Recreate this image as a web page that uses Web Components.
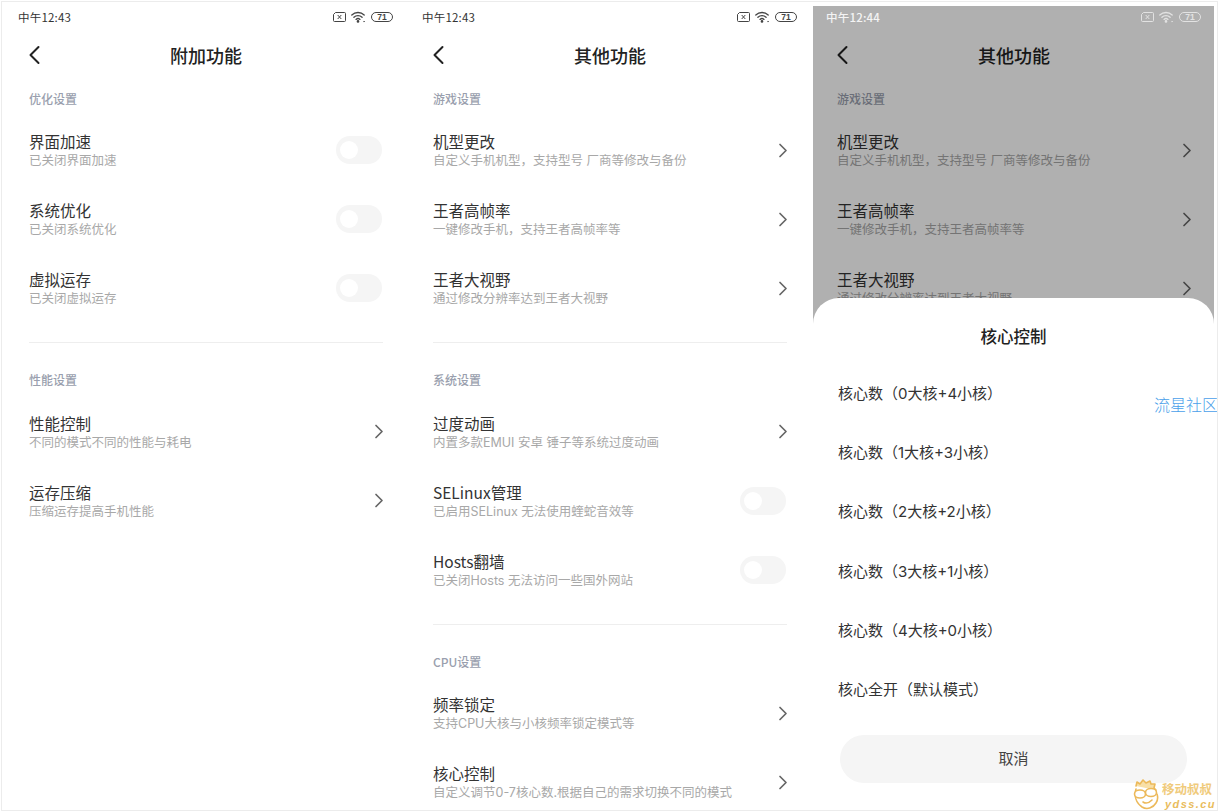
<!DOCTYPE html>
<html lang="zh">
<head>
<meta charset="utf-8">
<title>功能设置</title>
<style>
  html, body { margin: 0; height: 100%; background: #fff; overflow: hidden; }
  body { font-family: "Noto Sans CJK SC", "Noto Sans", sans-serif; color: #333; }
  phone-screen:nth-child(3) { --pad-left: 24px; --edge: 3px; --top: 4px; --status-h: 28px; --status-pb: 6px; }
</style>
</head>
<body>
<screen-frame>
  <phone-screen>
    <status-bar time="中午12:43"></status-bar>
    <nav-bar title="附加功能"></nav-bar>
    <setting-section label="优化设置">
      <setting-row title="界面加速" sub="已关闭界面加速" type="switch"></setting-row>
      <setting-row title="系统优化" sub="已关闭系统优化" type="switch"></setting-row>
      <setting-row title="虚拟运存" sub="已关闭虚拟运存" type="switch"></setting-row>
    </setting-section>
    <setting-section label="性能设置" divided>
      <setting-row title="性能控制" sub="不同的模式不同的性能与耗电"></setting-row>
      <setting-row title="运存压缩" sub="压缩运存提高手机性能"></setting-row>
    </setting-section>
  </phone-screen>

  <phone-screen>
    <status-bar time="中午12:43"></status-bar>
    <nav-bar title="其他功能"></nav-bar>
    <setting-section label="游戏设置">
      <setting-row title="机型更改" sub="自定义手机机型，支持型号 厂商等修改与备份"></setting-row>
      <setting-row title="王者高帧率" sub="一键修改手机，支持王者高帧率等"></setting-row>
      <setting-row title="王者大视野" sub="通过修改分辨率达到王者大视野"></setting-row>
    </setting-section>
    <setting-section label="系统设置" divided>
      <setting-row title="过度动画" sub="内置多款EMUI 安卓 锤子等系统过度动画"></setting-row>
      <setting-row title="SELinux管理" sub="已启用SELinux 无法使用蝰蛇音效等" type="switch"></setting-row>
      <setting-row title="Hosts翻墙" sub="已关闭Hosts 无法访问一些国外网站" type="switch"></setting-row>
    </setting-section>
    <setting-section label="CPU设置" divided>
      <setting-row title="频率锁定" sub="支持CPU大核与小核频率锁定模式等"></setting-row>
      <setting-row title="核心控制" sub="自定义调节0-7核心数.根据自己的需求切换不同的模式"></setting-row>
    </setting-section>
  </phone-screen>

  <phone-screen dimmed>
    <status-bar time="中午12:44" light></status-bar>
    <nav-bar title="其他功能"></nav-bar>
    <setting-section label="游戏设置">
      <setting-row title="机型更改" sub="自定义手机机型，支持型号 厂商等修改与备份"></setting-row>
      <setting-row title="王者高帧率" sub="一键修改手机，支持王者高帧率等"></setting-row>
      <setting-row title="王者大视野" sub="通过修改分辨率达到王者大视野"></setting-row>
    </setting-section>
    <bottom-sheet title="核心控制" cancel="取消">
      <sheet-item>核心数（0大核+4小核）</sheet-item>
      <sheet-item>核心数（1大核+3小核）</sheet-item>
      <sheet-item>核心数（2大核+2小核）</sheet-item>
      <sheet-item>核心数（3大核+1小核）</sheet-item>
      <sheet-item>核心数（4大核+0小核）</sheet-item>
      <sheet-item>核心全开（默认模式）</sheet-item>
    </bottom-sheet>
  </phone-screen>

  <water-marks></water-marks>
</screen-frame>

<script>
class ScreenFrame extends HTMLElement {
  connectedCallback() {
    this.attachShadow({ mode: 'open' });
    this.shadowRoot.innerHTML = `
      <style>
        :host {
          display: flex;
          position: relative;
          box-sizing: border-box;
          margin: 1px;
          height: 810px;
          width: 1217px;
          border: 1px solid #ececec;
          overflow: hidden;
          background: #fff;
        }
      </style>
      <slot></slot>
    `;
  }
}
customElements.define('screen-frame', ScreenFrame);

class PhoneScreen extends HTMLElement {
  connectedCallback() {
    this.attachShadow({ mode: 'open' });
    this.shadowRoot.innerHTML = `
      <style>
        :host {
          display: block;
          position: relative;
          box-sizing: border-box;
          flex: 0 0 auto;
          width: calc(404px - var(--edge, 0px));
          margin-left: var(--edge, 0px);
          margin-top: var(--top, 0px);
          height: calc(100% - var(--top, 0px));
          padding: 0 23px 0 var(--pad-left, 27px);
          overflow: hidden;
        }
        .dim {
          position: absolute;
          inset: 0;
          background: rgba(0,0,0,0.31);
          z-index: 1;
        }
      </style>
      ${this.hasAttribute('dimmed') ? '<div class="dim"></div>' : ''}
      <slot></slot>
    `;
  }
}
customElements.define('phone-screen', PhoneScreen);

class StatusBar extends HTMLElement {
  connectedCallback() {
    this.attachShadow({ mode: 'open' });
    const light = this.hasAttribute('light');
    this.shadowRoot.innerHTML = `
      <style>
        :host {
          display: flex;
          position: relative;
          z-index: 2;
          box-sizing: border-box;
          align-items: center;
          justify-content: space-between;
          height: var(--status-h, 32px);
          padding-bottom: var(--status-pb, 2px);
          margin: 0 -10px 0 -11px;
          color: ${light ? '#f4f4f4' : '#333'};
          font-size: 11.5px;
          font-weight: ${light ? 500 : 400};
          letter-spacing: 0.2px;
        }
        .icons { display: flex; align-items: center; gap: 5px; color: ${light ? '#e2e2e2' : '#444'}; }
        svg { display: block; }
        .battery {
          box-sizing: border-box;
          width: 22px;
          height: 10px;
          border: 1px solid currentColor;
          border-radius: 5px;
          font: 700 8.5px/8px "Liberation Sans", sans-serif;
          text-align: center;
          letter-spacing: 0;
        }
      </style>
      <span>${this.getAttribute('time')}</span>
      <span class="icons">
        <svg width="13" height="10" viewBox="0 0 13 10" fill="none" stroke="currentColor" stroke-width="1">
          <path d="M2.5 .5h9a1 1 0 0 1 1 1v7a1 1 0 0 1-1 1h-10a1 1 0 0 1-1-1v-6z"/>
          <path d="M4.7 3l3.6 4M8.3 3l-3.6 4"/>
        </svg>
        <svg width="15" height="12" viewBox="0 0 15 12" fill="none" stroke="currentColor" stroke-width="1.3" stroke-linecap="round">
          <path d="M.8 4a9 9 0 0 1 12.4 0"/>
          <path d="M2.9 6.2a6 6 0 0 1 8.2 0"/>
          <path d="M5 8.4a3 3 0 0 1 4 0"/>
          <circle cx="7" cy="10.4" r=".7" fill="currentColor"/>
          <circle cx="13" cy="10.6" r=".4" fill="currentColor" stroke-width=".5"/>
        </svg>
        <span class="battery">71</span>
      </span>
    `;
  }
}
customElements.define('status-bar', StatusBar);

class NavBar extends HTMLElement {
  connectedCallback() {
    this.attachShadow({ mode: 'open' });
    this.shadowRoot.innerHTML = `
      <style>
        :host {
          display: grid;
          grid-template-columns: 40px 1fr 40px;
          align-items: center;
          height: 44px;
          margin-top: -1px;
        }
        svg { display: block; }
        .title {
          text-align: center;
          font-size: 18px;
          line-height: 44px;
          font-weight: 500;
          color: #222;
        }
      </style>
      <svg width="12" height="20" viewBox="0 0 12 20" fill="none" stroke="#222" stroke-width="2" stroke-linecap="round" stroke-linejoin="round">
        <path d="M9.5 2L1.5 10l8 8"/>
      </svg>
      <div class="title">${this.getAttribute('title')}</div>
      <span></span>
    `;
  }
}
customElements.define('nav-bar', NavBar);

class SettingSection extends HTMLElement {
  connectedCallback() {
    this.attachShadow({ mode: 'open' });
    const divided = this.hasAttribute('divided');
    this.shadowRoot.innerHTML = `
      <style>
        :host { display: block; }
        .line { height: 1px; background: #eee; margin: 19.5px 0 27px; }
        .label {
          margin-top: ${divided ? 0 : 12}px;
          margin-bottom: ${divided ? 7 : 6.5}px;
          font-size: 12px;
          line-height: 20px;
          font-weight: 500;
          color: #9a9fae;
        }
      </style>
      ${divided ? '<div class="line"></div>' : ''}
      <div class="label">${this.getAttribute('label')}</div>
      <slot></slot>
    `;
  }
}
customElements.define('setting-section', SettingSection);

class SettingRow extends HTMLElement {
  connectedCallback() {
    this.attachShadow({ mode: 'open' });
    const isSwitch = this.getAttribute('type') === 'switch';
    this.shadowRoot.innerHTML = `
      <style>
        :host {
          display: flex;
          align-items: center;
          justify-content: space-between;
          height: 69px;
        }
        .title { font-size: 15.5px; line-height: 20px; color: #333; }
        .sub {
          margin-top: 2px;
          font-family: Inter, "Noto Sans CJK SC", sans-serif;
          font-size: 12.5px;
          line-height: 16px;
          color: #a8a8a8;
        }
        .switch {
          position: relative;
          box-sizing: border-box;
          width: 46px;
          height: 28px;
          margin-right: 1px;
          border-radius: 14px;
          background: #f5f5f5;
        }
        .switch::after {
          content: "";
          position: absolute;
          left: 4px;
          top: 5px;
          width: 18px;
          height: 18px;
          border-radius: 50%;
          background: #fff;
        }
        svg { display: block; margin-right: -1px; }
      </style>
      <div class="text">
        <div class="title">${this.getAttribute('title')}</div>
        <div class="sub">${this.getAttribute('sub')}</div>
      </div>
      ${isSwitch ? '<div class="switch"></div>' : `
      <svg width="10" height="15" viewBox="0 0 10 15" fill="none" stroke="#666" stroke-width="1.7" stroke-linecap="round" stroke-linejoin="round">
        <path d="M2 1.5l6 6-6 6"/>
      </svg>`}
    `;
  }
}
customElements.define('setting-row', SettingRow);

class BottomSheet extends HTMLElement {
  connectedCallback() {
    this.attachShadow({ mode: 'open' });
    this.shadowRoot.innerHTML = `
      <style>
        :host {
          position: absolute;
          left: 0;
          right: 0;
          bottom: 0;
          z-index: 3;
          display: flex;
          flex-direction: column;
          box-sizing: border-box;
          height: 512px;
          padding-left: 25px;
          background: #fff;
          border-radius: 26px 26px 0 0;
        }
        .title {
          height: 65px;
          padding-top: 12px;
          box-sizing: border-box;
          margin-left: -25px;
          text-align: center;
          font-size: 16.5px;
          line-height: 52px;
          font-weight: 500;
          color: #222;
        }
        .cancel {
          box-sizing: border-box;
          width: 347px;
          height: 48px;
          margin: 17px 0 0 2px;
          border-radius: 24px;
          background: #f5f5f5;
          text-align: center;
          font-size: 15px;
          line-height: 46px;
          color: #444;
        }
      </style>
      <div class="title">${this.getAttribute('title')}</div>
      <slot></slot>
      <div class="cancel">${this.getAttribute('cancel')}</div>
    `;
  }
}
customElements.define('bottom-sheet', BottomSheet);

class SheetItem extends HTMLElement {
  connectedCallback() {
    this.attachShadow({ mode: 'open' });
    this.shadowRoot.innerHTML = `
      <style>
        :host {
          display: block;
          box-sizing: border-box;
          height: 59.2px;
          padding-top: 1px;
          line-height: 59.2px;
          font-family: Inter, "Noto Sans CJK SC", sans-serif;
          font-size: 15px;
          color: #333;
          white-space: nowrap;
        }
      </style>
      <slot></slot>
    `;
  }
}
customElements.define('sheet-item', SheetItem);

// the two stamps that were pasted over the screenshot
class WaterMarks extends HTMLElement {
  connectedCallback() {
    this.attachShadow({ mode: 'open' });
    this.shadowRoot.innerHTML = `
      <style>
        :host { display: contents; }
        .blue {
          position: absolute;
          left: 1152px;
          top: 390px;
          z-index: 5;
          font-size: 16px;
          line-height: 24px;
          font-weight: 300;
          color: #4a9fea;
          white-space: nowrap;
        }
        .logo {
          position: absolute;
          left: 1129px;
          top: 775px;
          z-index: 5;
          display: flex;
          width: 90px;
          height: 34px;
        }
        .logo svg { flex: none; display: block; }
        .name {
          font-size: 12.5px;
          line-height: 15px;
          font-weight: 700;
          color: #f0cb7c;
          margin-top: 4px;
          white-space: nowrap;
        }
        .url {
          font: italic 700 11px/11px "Liberation Sans", sans-serif;
          color: #e9bc5c;
          letter-spacing: 1.4px;
          margin: 3px 0 0 3px;
        }
      </style>
      <div class="blue">流星社区</div>
      <div class="logo">
        <svg width="31" height="34" viewBox="0 0 31 34" fill="none" stroke="#ecb95a" stroke-width="1.6" stroke-linecap="round" stroke-linejoin="round">
          <path d="M5 9l1-4 3 2 3-4 3 3 4-2 1 3 4 0-1 4 2 2" fill="#f8dfa6"/>
          <path d="M5 12c-2 7 0 14 6 18 5 3 11 1 14-4 2-3 2-6 1-9"/>
          <ellipse cx="9" cy="17" rx="5.5" ry="4" fill="#fff"/>
          <ellipse cx="20" cy="15.5" rx="5.5" ry="4" fill="#fff"/>
          <path d="M12 25c3 2 6 1 9-2"/>
        </svg>
        <div>
          <div class="name">移动叔叔</div>
          <div class="url">ydss.cu</div>
        </div>
      </div>
    `;
  }
}
customElements.define('water-marks', WaterMarks);
</script>
</body>
</html>
